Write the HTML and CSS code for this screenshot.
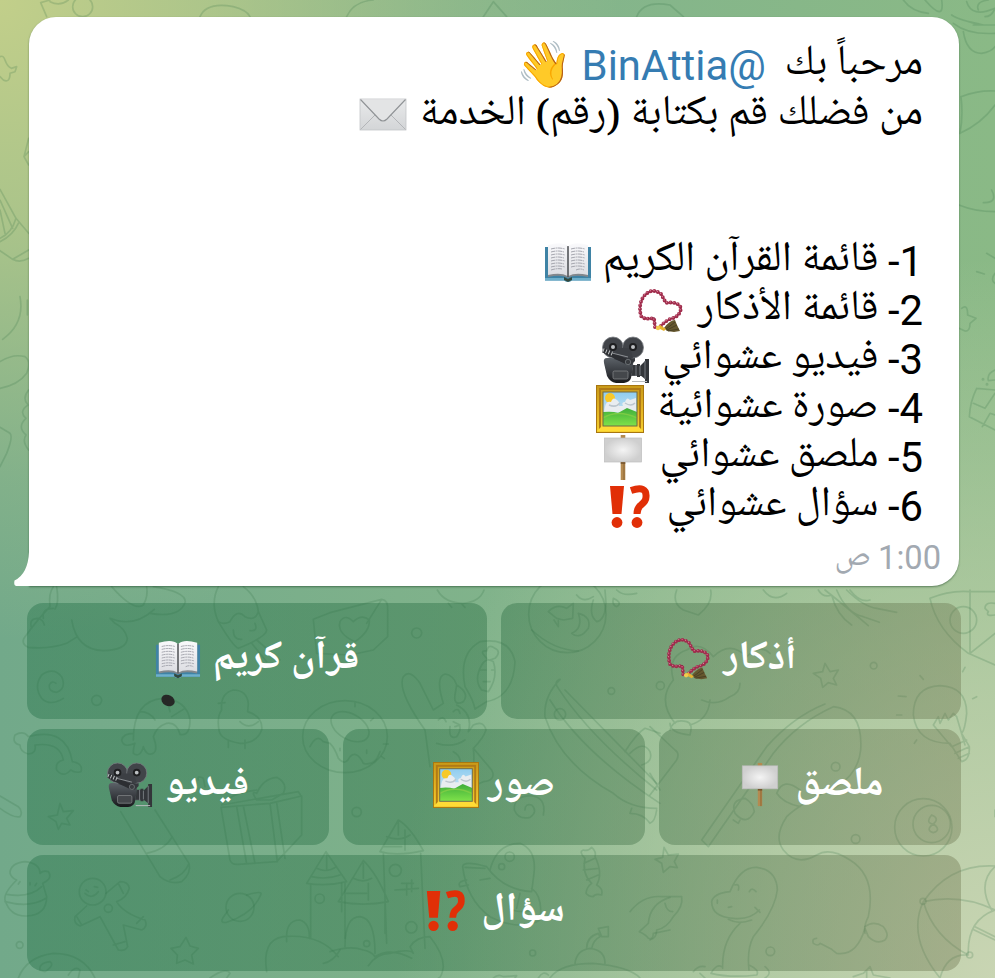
FILE: index.html
```
<!DOCTYPE html>
<html lang="ar" dir="rtl">
<head>
<meta charset="utf-8">
<title>BinAttia</title>
<link rel="stylesheet" href="styles.css">
</head>
<body>
<svg class="defs" width="0" height="0" aria-hidden="true">
  <defs>
    <linearGradient id="gold" x2="0" y2="1"><stop offset="0" stop-color="#c99a19"/><stop offset=".5" stop-color="#e3b323"/><stop offset="1" stop-color="#f5cf2f"/></linearGradient>
    <linearGradient id="sky" x2="0" y2="1"><stop offset="0" stop-color="#8fcdf0"/><stop offset="1" stop-color="#e6eff2"/></linearGradient>
    <linearGradient id="grass" x2="0" y2="1"><stop offset="0" stop-color="#3fae3a"/><stop offset="1" stop-color="#7fe24a"/></linearGradient>
    <linearGradient id="metal" x2="0" y2="1"><stop offset="0" stop-color="#5b6167"/><stop offset=".6" stop-color="#34373c"/><stop offset="1" stop-color="#17181b"/></linearGradient>
    <linearGradient id="paper" x2="0" y2="1"><stop offset="0" stop-color="#fafafc"/><stop offset="1" stop-color="#dcdde2"/></linearGradient>
    <radialGradient id="board"><stop offset="0" stop-color="#f4f4f4"/><stop offset="1" stop-color="#cfcfcf"/></radialGradient>
    <linearGradient id="mail" x2="0" y2="1"><stop offset="0" stop-color="#e9eaeb"/><stop offset="1" stop-color="#d3d5d7"/></linearGradient>
    <symbol id="envelope" viewBox="0 0 48 48">
      <rect x="1" y="8" width="46" height="31" fill="url(#mail)" stroke="#c4c6c8" stroke-width=".8"/>
      <path d="M1.5 38.500L17 23M46.500 38.500L31 23" stroke="#b3b5b8" fill="none"/>
      <path d="M1.500 8.500L20 28Q24 32 28 28L46.500 8.500" stroke="#909396" fill="#e3e4e5" stroke-width="1.100"/>
    </symbol>
    <symbol id="book" viewBox="0 0 48 48">
      <path d="M1 9H47V42.500H28Q24 45 20 42.500H1Z" fill="#3f83a5"/>
      <path d="M1 40H20Q24 43 28 40H47V42.500H28Q24 45 20 42.500H1Z" fill="#6eb0cc"/>
      <path d="M4 8Q18 4 24 9Q30 4 44 8V39Q30 36 24 40Q18 36 4 39Z" fill="#83888d"/>
      <path d="M4 7Q18 3 23.500 8V38Q17 34 4 37Z" fill="url(#paper)"/><path d="M44 7Q30 3 24.500 8V38Q31 34 44 37Z" fill="url(#paper)"/>
      <path d="M7 11Q14 9 21 11M7 14Q14 12 20 14M7 17Q14 15 21 17M7 20Q14 18 20 20M7 23Q14 21 21 23M7 26Q14 24 20 26M7 29Q14 27 21 29M7 32Q13 30 18 31M27 11Q34 9 41 11M27 14Q34 12 40 14M27 17Q34 15 41 17M27 20Q34 18 41 20M27 23Q34 21 40 23M27 26Q34 24 41 26M27 29Q34 27 41 29M32 32Q36 30 40 32" fill="none" stroke="#9c9da6" stroke-width=".9" stroke-dasharray="4 .6 2 .5"/>
      <path d="M24 8V39" stroke="#4b4d50" stroke-width="1.300"/><path d="M20 39L24 41L28 39V42L24 44L20 42Z" fill="#32483e"/>
    </symbol>
    <symbol id="beads" viewBox="0 0 48 48">
      <path d="M19 40L18 31Q8 33 5 29Q2 17 8 9Q16 0 25 7L30 16Q42 14 45 21Q44 30 34 32Q28 35 24 40" fill="none" stroke="#74203a" stroke-width="1.300"/>
      <path d="M19 40L18 31Q8 33 5 29Q2 17 8 9Q16 0 25 7L30 16Q42 14 45 21Q44 30 34 32Q28 35 24 40" fill="none" stroke="#a02c4c" stroke-width="3.900" stroke-dasharray="0 3.700" stroke-linecap="round"/>
      <path d="M19 40L18 31Q8 33 5 29Q2 17 8 9Q16 0 25 7L30 16Q42 14 45 21Q44 30 34 32Q28 35 24 40" fill="none" stroke="#d98098" stroke-width="1.300" stroke-dasharray="0 3.700" stroke-linecap="round" transform="translate(-.4 -.6)"/>
      <path d="M28 41Q34 33 39 33L41 38L44 44L38 45L31 44Z" fill="#65572e"/><path d="M30 42L39 35M31 43L41 38M32 44L43 42" stroke="#413a22" stroke-width=".8"/>
      <path d="M20 40L24 38L30 42L28 44Z" fill="#e5b32f"/><circle cx="22" cy="41" r="2.200" fill="#f2cb50"/>
    </symbol>
    <symbol id="camera" viewBox="0 0 48 48">
      <path d="M31 30H43V40H29Z" fill="#4b4f54"/>
      <path d="M2 27Q1 22 5 22H29Q32 23 31 31L29 42Q28 46 22 47H14Q8 46 5 40Z" fill="url(#metal)"/>
      <path d="M10 17H33L33 25L29 29L12 23Z" fill="#35383d"/>
      <circle cx="11" cy="11.500" r="10.500" fill="#414449" stroke="#777b80" stroke-width=".8"/><circle cx="31" cy="11.500" r="10.500" fill="#414449" stroke="#777b80" stroke-width=".8"/>
      <path d="M14 12H28L31 22H13Z" fill="#3c3f44"/>
      <g fill="#bcbfc2" stroke="#1e1f21" stroke-width="2"><circle cx="11" cy="11" r="3"/><circle cx="31" cy="11" r="3"/></g>
      <path d="M1 14L27 27" stroke="#2c2e32" stroke-width="5"/><path d="M1 14L11 18" stroke="#c5c8ca" stroke-width="4" stroke-dasharray="1 2"/><path d="M10 17L26 21" stroke="#8c9094"/><circle cx="26" cy="26" r="2.700" fill="#393c40" stroke="#74787c" stroke-width=".8"/>
      <rect x="11" y="35" width="15" height="8" rx="1.500" fill="#44474b" stroke="#8b8e91" stroke-width=".7"/>
      <path d="M31 29H35V28H38V30L43 25V23H47V47H43V43L38 39V41H35V39H30Z" fill="#33363a"/><path d="M34 29V40M38 30V39M43 25V43" stroke="#777b80"/><path d="M30 45.500H45" stroke="#b8babc"/>
    </symbol>
    <symbol id="picture" viewBox="0 0 48 48">
      <rect width="48" height="48" fill="#a87610"/><rect x="1" y="1" width="46" height="46" fill="url(#gold)"/>
      <rect x="4" y="4" width="40" height="40" fill="none" stroke="#b07a16" stroke-width="2"/><path d="M1 46L7 40H41L47 46Z" fill="#ffdb36"/>
      <rect x="7" y="7" width="34" height="34" fill="url(#sky)"/>
      <circle cx="14" cy="13" r="5" fill="#f8c92a"/><path d="M9 22Q10 16 15 17Q17 11 21 15Q24 17 23 21H27Q25 17 29 17Q31 11 34 15L40 13V27H8Z" fill="#e9edf0"/><path d="M13 20Q20 23 24 18M29 18Q35 22 39 18" stroke="#bcc6ce" fill="none" stroke-width="1.500"/>
      <path d="M7 27Q17 26 22 28L31 23L41 27V41H7Z" fill="url(#grass)"/><path d="M7 33Q22 24 41 33" stroke="#7ccc45" fill="none" stroke-width="1.500"/><rect x="7" y="7" width="34" height="34" fill="none" stroke="#6f6a45"/>
    </symbol>
    <symbol id="placard" viewBox="0 0 48 48">
      <rect x="21.700" y="1" width="4.600" height="45" fill="#b48a50"/><path d="M25 29V46" stroke="#8c6534"/>
      <rect x="5.500" y="4" width="37" height="24" fill="url(#board)" stroke="#bcbcbc" stroke-width=".7"/><path d="M21.700 29H26.300" stroke="#70512b" stroke-width="1.500"/>
    </symbol>
    <symbol id="interrobang" viewBox="0 0 48 48">
      <g fill="#e12f07"><path d="M4 3H18L15.500 31H6.500Z"/><circle cx="11" cy="39.500" r="5.400"/><circle cx="31" cy="39.500" r="5.400"/></g>
      <path d="M25 7.500Q41 2 40 14Q40 18 35 22Q31 25 31 31" fill="none" stroke="#e12f07" stroke-width="7"/>
    </symbol>
  </defs>
</svg>

<svg class="doodles" viewBox="0 0 995 978" aria-hidden="true">
  <g transform="scale(.33333)">
    <path d="M140 50L122 8L150 0M150 5Q180 20 205 0M0 170Q10 165 15 180Q22 200 34 205L50 200L45 215L30 220Q30 250 10 240L0 230M86 415L72 470L86 495M72 470L86 455M0 568L48 655L86 700M0 600L38 685M0 630L15 700M48 655Q35 700 0 715M55 670Q40 705 0 725M0 752L38 778Q60 790 86 775M38 778L86 750M60 890Q75 970 8 1018M82 900V945M0 1085Q40 1060 75 1070Q95 1085 80 1120Q55 1155 0 1165M86 1170Q65 1195 84 1215Q55 1235 78 1255Q50 1280 78 1305Q65 1325 86 1350M0 1282L30 1300Q40 1310 20 1360L0 1400"/>
    <circle cx="248" cy="20" r="30"/><path d="M600 50Q620 5 700 20Q740 30 750 50M1040 50Q1060 5 1120 0M1450 50L1480 5L1520 50M1910 50Q1930 0 2010 15L2050 50"/>
  </g>
  <g transform="translate(895 0) scale(.33333)">
    <path d="M25 0Q50 35 100 40M90 0Q150 70 140 0M175 70Q220 105 300 100M170 45Q190 60 265 75M215 5Q230 55 300 25M235 75H300M250 30Q240 5 280 0M270 50Q290 50 300 25M205 95Q215 160 260 160Q290 155 300 140M198 290Q250 270 300 273M198 290Q205 350 195 400Q260 370 300 315M192 615Q240 635 300 635M265 608Q310 610 290 570M275 760L300 775M245 815L268 822M300 820Q285 840 300 850M200 925Q218 910 218 945L243 955L225 970Q225 995 210 993L192 985M300 1110Q275 1120 280 1142L300 1140M245 1165Q225 1205 223 1250L300 1290M245 1165L300 1170M235 1210L270 1225L300 1180M262 1280L285 1240L300 1245"/>
    <circle cx="264" cy="1138" r="2"/><circle cx="276" cy="1153" r="2"/>
  </g>
  <g transform="translate(0 540) scale(.33333)">
    <path d="M85 322Q60 310 75 290Q120 230 150 200Q145 160 160 140M85 322Q150 328 200 310L232 290M215 240Q230 330 310 332Q380 330 382 295Q375 265 345 250L330 235Q400 265 463 208M450 220Q540 235 556 185Q555 155 460 140M335 140Q400 215 430 195Q445 170 440 140M95 265Q85 235 115 235Q130 240 133 255M130 235Q125 205 160 205M170 140Q178 190 165 207"/>
    <path d="M655 140Q630 190 655 245Q670 255 690 245Q710 205 735 230Q765 245 775 215Q770 170 730 140M775 215L800 270Q800 290 715 325Q700 320 655 245M700 270Q700 300 725 298M765 250Q775 275 750 272M770 300L840 360M755 310L800 365"/>
    <path d="M190 475Q150 500 125 475Q100 440 125 405Q160 380 185 410Q200 445 170 457Q145 455 148 435Q155 420 168 430"/><circle cx="290" cy="481" r="15"/>
    <path d="M665 510Q660 460 700 450Q740 450 745 490L743 515Q790 530 785 570Q770 610 720 610Q660 600 657 570Q650 530 665 510M720 545Q745 570 775 545M655 490L675 488M685 600V622M735 600V625"/>
    <path d="M400 600Q400 480 490 475Q560 480 570 540Q570 590 540 583Q530 545 500 550Q470 560 460 590Q475 630 460 640Q440 650 430 620Q420 655 400 640Q400 620 405 610Q370 625 365 600Q370 580 400 580M420 515Q450 515 465 540M500 478L510 515M515 530L555 505"/>
  </g>
  <g transform="translate(330 590) scale(.33333)">
    <path d="M0 68L155 28Q175 30 173 60V140L130 180L60 195L-40 190L-50 88L0 68M155 28L110 100M75 155Q20 130 30 95Q45 70 70 95Q95 70 118 90Q120 125 75 155"/><circle cx="260" cy="129" r="15"/>
    <path d="M322 0Q345 40 400 40Q450 35 462 0M355 40L365 52M395 42L405 52"/>
    <circle cx="712" cy="72" r="116"/><path d="M605 120Q670 180 745 183M655 65Q680 40 710 55L730 40L728 85L700 90L680 85L655 65M672 90L685 110V92M745 70Q785 80 775 115Q750 150 725 130Q760 115 745 70M740 15Q760 40 790 20M790 30Q775 75 800 95Q825 90 828 40L825 0M850 25Q845 45 860 50Q880 40 850 25M860 0Q880 20 920 10"/>
    <path d="M435 357Q430 330 405 290Q385 190 450 155Q540 140 555 215Q550 320 470 335L435 357M455 300Q430 270 455 225Q470 200 490 215Q505 260 475 305L455 300M470 205Q445 180 470 183Q475 160 495 175Q515 185 495 205L480 210M450 240H468M460 275H480M485 240H493"/>
    <path d="M285 420Q200 300 220 260Q240 235 270 280L310 360L340 340Q315 260 345 252Q370 255 380 285Q420 310 400 335Q370 350 375 315L380 285M380 345Q430 370 415 425L430 405Q460 390 468 420Q460 445 430 475Q435 520 425 545M285 420L300 530M320 460Q370 475 405 450M325 390Q340 375 348 395M370 365Q385 350 390 370M370 395L390 405L375 410M360 410Q355 450 380 440Q395 420 388 405M370 485Q405 505 380 540M430 475L485 540Q500 570 460 575L425 590"/>
    <ellipse cx="45" cy="440" rx="127" ry="108"/><ellipse cx="60" cy="410" rx="62" ry="38" transform="rotate(30 60 410)"/><path d="M-60 470Q-40 430 -20 455L0 460Q15 475 25 505Q45 530 60 500Q80 480 100 520Q135 530 150 485M75 340V350M130 385L122 392M175 462H160M155 500L163 506M110 480V490M30 475V482"/>
    <path d="M690 268Q640 320 645 380Q690 520 850 610Q900 655 980 655M690 268Q670 275 685 295Q780 440 980 600M660 330Q760 490 990 640M705 300L980 580M885 485Q920 430 945 415L990 430M900 490Q940 450 960 485Q970 515 935 525M905 655L900 670Q940 670 960 700Q975 695 980 660"/><circle cx="690" cy="373" r="17"/><circle cx="844" cy="303" r="10"/>
    <path d="M640 675Q650 620 600 617Q550 620 553 660Q565 690 600 682Q625 665 605 645Q585 640 585 660"/><circle cx="80" cy="666" r="14"/>
  </g>
  <g transform="translate(650 590) scale(.33333)">
    <path d="M80 0Q65 40 100 60L145 75Q190 40 182 0M340 0Q370 40 410 10M505 0Q520 25 545 15Q560 75 605 105M525 0Q600 60 655 107M560 0Q590 70 640 80L688 97M590 0Q640 50 680 55L740 67M600 0Q630 40 660 30M840 25Q900 0 960 5H1035M840 25Q860 120 955 190L1035 225M960 0V190L1035 130M1035 40Q1005 35 1005 55L1015 65Q1005 80 1035 75"/><circle cx="940" cy="90" r="40"/>
    <path d="M525 220L540 245L565 240L550 265L560 285L535 278L518 292L512 265L490 250L518 245ZM75 400Q20 330 70 270Q50 200 110 180Q150 150 190 200Q240 150 290 200Q330 160 360 190M60 400Q60 430 120 435Q130 400 110 395Q70 385 60 420M180 330Q175 390 120 405M155 330Q200 350 240 320Q270 310 270 280"/><circle cx="31" cy="287" r="12"/><circle cx="671" cy="227" r="10"/>
    <path d="M525 342Q430 380 350 470L155 750L175 770L370 490Q440 400 550 350Q640 360 632 480Q625 550 560 590Q450 640 410 680Q370 740 400 780Q440 830 500 795Q540 770 600 810Q680 860 655 980Q640 1010 645 1030M450 600Q400 560 380 610Q400 640 450 650M285 625Q240 630 255 670Q290 710 313 665Q310 640 285 625M270 690L265 700L250 690M0 410L75 480Q90 490 80 510L0 615M0 550L30 600"/><circle cx="557" cy="530" r="13"/><circle cx="617" cy="747" r="13"/>
    <path d="M900 460Q800 460 790 375Q790 290 870 287Q950 290 950 370Q945 420 935 430L958 470Q960 510 935 515L900 460M850 405L865 380L870 400L885 370L895 390L910 370L920 380L945 465M850 405L905 470M905 470L950 450M915 490L958 470M925 505L958 490M745 318L768 320M740 375H755M800 450L793 460M810 257L820 268M945 232L938 245M980 320L968 326"/>
    <circle cx="820" cy="712" r="86"/><circle cx="845" cy="702" r="56"/><path d="M845 675Q825 700 850 702Q870 685 845 675M850 702Q825 720 850 728Q875 720 850 702"/><path d="M1035 660V680"/>
  </g>
  <g transform="translate(0 720) scale(.33333)">
    <path d="M85 102Q60 95 60 75Q35 70 45 45Q70 30 85 50Q200 20 217 125Q250 130 243 155Q225 160 212 150Q190 175 170 150Q165 125 190 120Q180 65 105 75Q110 100 85 102M0 228L55 260Q70 275 60 290Q40 295 0 265M180 250L190 275L220 272L200 295L210 315L185 310L175 328L168 305L145 290L172 285Z"/>
    <path d="M362 275L480 470Q510 495 545 485Q575 460 567 430L465 270M440 400Q495 390 517 350M510 480Q555 465 567 430M595 180Q590 165 610 175L615 200"/>
    <path d="M663 262L690 420Q695 435 715 433L830 425L905 345V230L895 215L665 255M663 262L810 250L905 228M710 260L740 432M730 258L765 430M810 250L832 425M830 248L855 415M665 255Q690 220 770 210M770 220Q790 175 830 172Q865 190 850 220L815 240L770 240Q750 210 770 220"/>
    <path d="M75 425Q30 430 30 460Q35 475 50 480Q10 520 15 540Q30 590 80 588Q140 585 140 530L128 490Q160 475 145 455Q130 450 120 460Q120 430 75 425M20 523Q90 535 125 500M15 545Q90 565 138 535M60 485L55 492M90 488V495M110 490L105 497"/><circle cx="59" cy="675" r="10"/>
    <circle cx="278" cy="515" r="40"/><path d="M318 520L360 485Q385 485 388 505Q380 535 350 545Q370 580 435 600Q445 620 425 630L370 615L383 680Q375 695 355 690L300 590L240 618Q220 610 225 590L260 558M255 520Q275 540 295 515M258 510L265 515M283 500L293 502M230 590L245 615M355 490L370 520M410 610L430 590M340 675L375 665"/><circle cx="325" cy="565" r="12"/>
    <circle cx="720" cy="562" r="42"/><path d="M740 525Q790 510 782 525Q760 580 680 607Q660 610 668 595L685 570M558 652L570 678L595 685L575 705L580 732L555 720L530 730L532 705L513 685L540 680Z"/>
    <path d="M55 774Q80 710 160 700Q250 700 285 774M120 750Q115 730 150 725Q165 735 135 755ZM205 765Q225 735 240 750L235 774M630 774Q680 740 690 760L680 774"/>
    <path d="M978 395L920 490Q980 500 1040 485ZM932 495V655M1035 490V655M860 665Q855 600 900 600Q930 610 928 655M800 755Q785 660 850 650Q960 640 1015 710M970 730Q1000 725 1020 690M950 445Q980 460 1010 440M935 470Q980 480 1020 465M980 400V450"/><circle cx="959" cy="536" r="14"/>
  </g>
  <g transform="translate(330 820) scale(.33333)">
    <path d="M205 0L150 95Q200 110 280 92Q240 20 205 0M160 100L170 370M272 100L285 385M100 122L25 245Q100 260 175 245Q140 160 100 122M35 190V275M165 250V340M45 380Q45 290 90 290Q135 295 135 400M0 395Q60 375 100 390Q125 395 135 410Q180 380 245 415M115 437Q140 400 180 400Q240 385 250 400L240 380Q260 350 300 350Q340 400 340 440Q335 474 325 474M170 50Q210 65 240 45M160 80H215M205 0V45M225 30V90M70 175Q100 190 125 175M50 220H110M100 130V175M115 190V240M195 210L265 205M230 190V225M245 180V215M215 190H250"/><circle cx="196" cy="151" r="18"/><circle cx="244" cy="322" r="17"/><circle cx="110" cy="371" r="9"/>
    <path d="M480 150Q500 70 570 70Q620 90 612 160L605 215Q520 210 470 140Q400 120 398 140Q410 240 480 290Q570 335 630 300Q640 230 605 205M450 180L480 175M405 142L465 145M410 180Q380 185 390 200L415 195M570 220L560 265M545 270Q580 280 610 270"/><circle cx="539" cy="110" r="14"/><circle cx="515" cy="140" r="9"/>
    <path d="M765 115Q745 95 760 90Q775 95 785 82Q800 95 795 110Q820 160 800 195Q820 205 815 225Q795 220 790 230Q775 230 768 220Q770 200 785 190Q755 160 765 115ZM762 130L795 115M760 150L805 145M770 180L805 165"/>
    <path d="M735 430Q740 390 780 385Q825 390 825 430M770 385Q770 350 805 340L810 350Q790 360 785 385M805 325L835 320V350L815 350ZM660 474Q690 430 790 430Q900 440 930 474M625 474Q640 450 655 465M490 474Q505 460 520 470L560 467L555 474"/><circle cx="608" cy="399" r="9"/>
    <path d="M1020 232Q960 250 955 310L928 335Q950 345 955 355Q970 360 970 340L1020 330"/>
  </g>
  <g transform="translate(650 820) scale(.33333)">
    <path d="M42 82L55 105L85 102L73 125L82 143L60 140L40 157L35 130L15 118L38 112ZM-60 275Q-20 225 35 230L95 230Q100 260 70 290Q50 325 20 330Q20 355 0 360M45 250Q50 275 68 275"/>
    <path d="M240 215Q270 140 320 142Q380 150 382 210Q375 270 310 350Q290 390 297 450M240 215Q190 220 185 245Q185 290 250 295Q300 300 328 270M315 262L330 277M235 298Q265 315 305 300M270 310Q215 360 218 445M255 195Q270 190 265 210M298 215Q305 200 318 215M202 240V250M235 262L245 260M183 460Q200 430 215 440M183 460Q240 474 320 465Q330 450 297 435M130 455Q145 435 165 440M150 460L165 474M345 440Q370 460 345 474"/><circle cx="361" cy="394" r="13"/>
    <path d="M645 320Q670 300 700 320Q720 345 705 360Q680 375 655 350L645 325Q620 410 560 400L545 388L510 370Q505 380 490 370Q485 355 500 355M610 470L640 460L660 440L670 465L720 474M650 450V474"/>
    <path d="M820 245Q900 130 1035 138M820 245Q930 220 1035 270M820 245Q850 350 955 405M820 245Q770 350 870 474M955 405Q950 300 1035 270M870 474Q890 400 955 405M1035 140Q980 190 1025 270M975 320L1035 350M968 328L1035 360"/><circle cx="819" cy="244" r="9"/><circle cx="959" cy="405" r="9"/>
  </g>
</svg>

<main class="chat">
  <section class="bubble">
    <svg class="tail" viewBox="0 0 17 34"><path d="M15 0Q14 22 .5 28.500Q-.5 34 2 34H17V0Z" fill="#fff"/></svg>
    <div class="line l1"><span class="text">مرحباً بك&nbsp; <bdi class="mention">BinAttia@</bdi></span><span class="wave">👋</span></div>
    <div class="line l2"><span class="text">من فضلك قم بكتابة (رقم) الخدمة</span><svg class="emoji"><use href="#envelope"/></svg></div>
    <div class="line"></div>
    <div class="line"></div>
    <div class="line l3"><span class="text"><span class="num">1-</span> قائمة القرآن الكريم</span><svg class="emoji"><use href="#book"/></svg></div>
    <div class="line l4"><span class="text"><span class="num">2-</span> قائمة الأذكار</span><svg class="emoji"><use href="#beads"/></svg></div>
    <div class="line l5"><span class="text"><span class="num">3-</span> فيديو عشوائي</span><svg class="emoji"><use href="#camera"/></svg></div>
    <div class="line l6"><span class="text"><span class="num">4-</span> صورة عشوائية</span><svg class="emoji"><use href="#picture"/></svg></div>
    <div class="line l7"><span class="text"><span class="num">5-</span> ملصق عشوائي</span><svg class="emoji"><use href="#placard"/></svg></div>
    <div class="line l8"><span class="text"><span class="num">6-</span> سؤال عشوائي</span><svg class="emoji"><use href="#interrobang"/></svg></div>
    <time class="time"><span class="clock">1:00</span> ص</time>
  </section>

  <nav class="keyboard">
    <div class="row two">
      <button class="key"><span>أذكار</span><svg class="emoji"><use href="#beads"/></svg></button>
      <button class="key"><span>قرآن كريم</span><svg class="emoji"><use href="#book"/></svg><i class="dot"></i></button>
    </div>
    <div class="row three">
      <button class="key wide"><span>ملصق</span><svg class="emoji"><use href="#placard"/></svg></button>
      <button class="key tight"><span>صور</span><svg class="emoji"><use href="#picture"/></svg></button>
      <button class="key"><span>فيديو</span><svg class="emoji"><use href="#camera"/></svg></button>
    </div>
    <div class="row one">
      <button class="key"><span>سؤال</span><svg class="emoji"><use href="#interrobang"/></svg></button>
    </div>
  </nav>
</main>
</body>
</html>
```
FILE: styles.css
```
* { box-sizing: border-box; }
html, body { margin: 0; height: 978px; overflow: hidden; }
body {
  background:
    radial-gradient(ellipse 620px 640px at 0 0, #c2cf8a 0, rgba(194,207,138,.7) 35%, rgba(194,207,138,.2) 75%, rgba(194,207,138,0) 100%),
    radial-gradient(ellipse 600px 720px at 100% 100%, #c9d5b3 0, rgba(201,213,179,.65) 40%, rgba(201,213,179,0) 100%),
    linear-gradient(90deg, #72a98a, #84b58b 60%, #8ab986);
  font-family: "Noto Naskh Arabic UI", "Noto Naskh Arabic", Roboto, sans-serif;
}
.defs { position: absolute; }
.doodles { position: absolute; inset: 0; width: 995px; height: 978px; fill: none; stroke: rgba(50,115,70,.21); stroke-width: 5; stroke-linecap: round; stroke-linejoin: round; }
.chat { position: relative; padding: 17px 34px 0 27px; }
.bubble { position: relative; width: 930px; height: 569px; margin: 0 2px 17px auto; padding: 23px 36px 0 0; background: #fff; border-radius: 27px 27px 27px 0; box-shadow: 0 1px 2px rgba(20,60,30,.5); }
.tail { position: absolute; left: -15px; bottom: 0; width: 17px; height: 34px; }
.line { display: flex; align-items: center; height: 49px; font-size: 42.3px; line-height: 49px; color: #000; white-space: nowrap; }
.text { flex: none; }
.line .emoji { flex: none; width: 48px; height: 48px; margin-top: 2px; }
.num, .mention, .clock { font-family: Roboto, sans-serif; font-size: .99em; }
.mention { color: #357cb2; }
.wave { font-family: "Noto Color Emoji", sans-serif; font-size: 45px; line-height: 49px; }
.l1 .text { width: 351px; } .l2 .text { width: 516px; } .l3 .text { width: 331px; } .l4 .text { width: 239px; }
.l5 .text { width: 273px; } .l6 .text { width: 279px; } .l7 .text { width: 276px; } .l8 .text { width: 269px; }
.time { display: block; margin: 4px -18px 0 0; font-size: 33px; line-height: 46px; color: #a2a9b1; }
.keyboard { display: grid; gap: 10px; }
.row { display: grid; gap: 14px; height: 116px; }
.two { grid-template-columns: 1fr 1fr; }
.three { grid-template-columns: repeat(3, 1fr); }
.key { position: relative; display: flex; align-items: center; justify-content: center; gap: 12px; padding: 0 0 4px; border: 0; border-radius: 16px; color: #fff; font: 700 40px/60px "Noto Naskh Arabic UI", "Noto Naskh Arabic", sans-serif; background: linear-gradient(95deg, rgba(30,110,70,.4), rgba(40,108,65,.4) 50%, rgba(118,120,82,.4)) fixed; }
.key.tight { gap: 9px; }
.key.wide { gap: 13px; }
.key .emoji { flex: none; width: 46px; height: 46px; }
.dot { position: absolute; left: 134px; top: 92px; width: 14px; height: 11px; border-radius: 50%; background: #262826; transform: rotate(28deg); }
```
